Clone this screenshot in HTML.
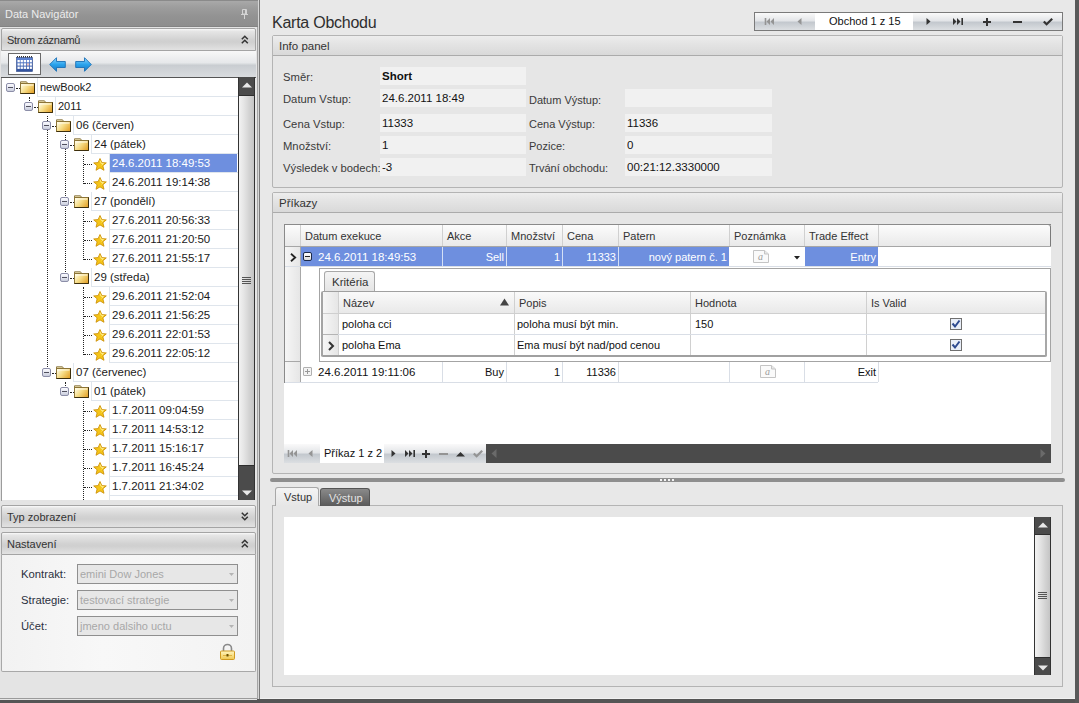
<!DOCTYPE html><html><head><meta charset="utf-8"><style>
*{margin:0;padding:0;box-sizing:border-box}
html,body{width:1079px;height:703px;overflow:hidden;background:#e8e8e8;font-family:"Liberation Sans",sans-serif;font-size:11px;color:#1e1e1e}
.a{position:absolute}
.t{position:absolute;white-space:nowrap;line-height:13px}
svg{position:absolute;overflow:visible}
.hdr{position:absolute;left:1px;width:255px;height:22px;border:1px solid #a4a4a4;border-radius:2px 2px 0 0;background:linear-gradient(#fafafa,#e6e6e6 10%,#d2d2d2 50%,#cfcfcf 62%,#e2e2e2);}
.hdr span{position:absolute;left:5px;top:5px;font-size:11px;color:#333;white-space:nowrap}
.cell{position:absolute;height:19px;border-left:1px solid #dfe5ec;border-bottom:1px solid #dfe5ec;background:#fff}
.cell span{position:absolute;left:2px;top:3px;font-size:11.5px;color:#1a1a1a;white-space:nowrap}
.cell b{position:absolute;left:0;top:0;right:1px;bottom:0;background:#6e8fdf}
.cell.sel span{color:#fff}
.exp{position:absolute;width:9px;height:9px;border:1px solid #8c8ea8;border-radius:2px;background:linear-gradient(#fbfbff,#e4e6f0 50%,#c9cddc)}
.exp:after{content:"";position:absolute;left:1px;top:3px;width:5px;height:1px;background:#50505e}
.vd{position:absolute;width:1px;border-left:1px dotted #222}
.hd{position:absolute;height:1px;border-top:1px dotted #222}
.lbl{position:absolute;white-space:nowrap;font-size:11.25px;color:#3a3a3a}
.box{position:absolute;background:#f1f1f1}
.box span{position:absolute;left:2px;top:3px;white-space:nowrap;font-size:11.5px;color:#111}
.grp{position:absolute;border:1px solid #b4b4b4;border-radius:2px;background:#e6e6e6}
.gh{position:absolute;left:0;top:0;right:0;height:20px;border-bottom:1px solid #ababab;background:linear-gradient(#ededed,#e4e4e4 40%,#d9d9d9)}
.gh span{position:absolute;left:6px;top:4px;font-size:11.5px;color:#333;white-space:nowrap}
.gcol{position:absolute;top:0;height:22px;border-right:1px solid #d4d4d4;background:linear-gradient(#fafafa,#ececec)}
.gcol span{position:absolute;left:5px;top:5px;font-size:11.5px;color:#333;white-space:nowrap}
.gc{position:absolute;white-space:nowrap;font-size:11.5px}
.vl{position:absolute;width:1px;background:#d9dee6}
.hl{position:absolute;height:1px;background:#d9dee6}
</style></head><body>
<div class="a" style="left:0;top:0;width:259px;height:700px;background:#e4e4e4"></div>
<div class="a" style="left:0;top:0;width:258px;height:27px;border-top:1px solid #8a8a8a;border-bottom:1px solid #838383;background:linear-gradient(#a9a9a9,#9d9d9d 25%,#939393 60%,#8e8e8e)"><span class="t" style="left:5px;top:7px;font-size:11px;color:#ececec">Data Navigátor</span></div>
<svg style="left:241px;top:9px" width="8" height="10" viewBox="0 0 8 10"><path d="M1.5 0.5h4v4.5h-4z" fill="none" stroke="#d4d4d4" stroke-width="1"/><path d="M4.5 1v4" stroke="#d4d4d4" stroke-width="1"/><path d="M0 5.5h7" stroke="#d4d4d4" stroke-width="1"/><path d="M3.5 6v4" stroke="#d4d4d4" stroke-width="1"/></svg>
<div class="a" style="left:257px;top:27px;width:1px;height:673px;background:#a4a4a4"></div>
<div class="a" style="left:258px;top:0;width:1px;height:700px;background:#d6d6d6"></div>
<div class="a" style="left:259px;top:0;width:1px;height:700px;background:#7a7a7a"></div>
<div class="hdr" style="top:28px;height:23px"><span style="letter-spacing:-0.3px">Strom záznamů</span></div>
<svg style="left:241px;top:35px" width="8" height="9" viewBox="0 0 8 9"><path d="M0.8 4.2L3.8 1.2 6.8 4.2M0.8 8.2L3.8 5.2 6.8 8.2" fill="none" stroke="#333" stroke-width="1.5"/></svg>
<div class="a" style="left:1px;top:51px;width:255px;height:27px;background:linear-gradient(#f8f8f8,#e6e8ea 45%,#c9cdd1 55%,#d9dcdf);border-bottom:1px solid #555"><div class="a" style="left:7px;top:2px;width:33px;height:22px;border:1px solid #6a6a6a;background:#fff"></div></div>
<svg style="left:16px;top:56px" width="17" height="16" viewBox="0 0 17 16"><defs><linearGradient id="cg" x1="0" y1="0" x2="0" y2="1"><stop offset="0" stop-color="#5f86d8"/><stop offset="1" stop-color="#2f4f9a"/></linearGradient></defs><rect x="0.5" y="1.5" width="16" height="14" fill="url(#cg)" stroke="#2c4788" stroke-width="0.6"/><path d="M1 0.8h15" stroke="#333" stroke-width="1.4" stroke-dasharray="1 1"/><g fill="#fff"><rect x="1.5" y="4" width="2.3" height="2.3"/><rect x="4.6" y="4" width="2.3" height="2.3"/><rect x="7.7" y="4" width="2.3" height="2.3"/><rect x="10.8" y="4" width="2.3" height="2.3"/><rect x="13.9" y="4" width="2" height="2.3"/><rect x="1.5" y="7.3" width="2.3" height="2.3"/><rect x="4.6" y="7.3" width="2.3" height="2.3"/><rect x="7.7" y="7.3" width="2.3" height="2.3"/><rect x="10.8" y="7.3" width="2.3" height="2.3" fill="#f3c9c0"/><rect x="13.9" y="7.3" width="2" height="2.3"/><rect x="1.5" y="10.6" width="2.3" height="2.3"/><rect x="4.6" y="10.6" width="2.3" height="2.3"/><rect x="7.7" y="10.6" width="2.3" height="2.3"/><rect x="10.8" y="10.6" width="2.3" height="2.3"/><rect x="13.9" y="10.6" width="2" height="2.3"/></g></svg>
<svg style="left:49px;top:57px" width="17" height="15" viewBox="0 0 17 15"><defs><linearGradient id="ag" x1="0" y1="0" x2="0" y2="1"><stop offset="0" stop-color="#8fd6ff"/><stop offset="0.5" stop-color="#2aa3ec"/><stop offset="1" stop-color="#1778c4"/></linearGradient></defs><path d="M0.7 7.5L7.5 0.7V4.5H16.3V10.5H7.5V14.3z" fill="url(#ag)" stroke="#1a6fb5" stroke-width="0.9"/></svg><svg style="left:75px;top:57px" width="17" height="15" viewBox="0 0 17 15"><path d="M16.3 7.5L9.5 0.7V4.5H0.7V10.5H9.5V14.3z" fill="url(#ag)" stroke="#1a6fb5" stroke-width="0.9"/></svg>
<div class="a" style="left:2px;top:78px;width:236px;height:422px;background:#fff;overflow:hidden">
<div class="vd" style="left:27px;top:19px;height:4px"></div>
<div class="vd" style="left:45px;top:38px;height:253px"></div>
<div class="vd" style="left:63px;top:57px;height:139px"></div>
<div class="vd" style="left:81px;top:77px;height:29px"></div>
<div class="vd" style="left:81px;top:133px;height:49px"></div>
<div class="vd" style="left:81px;top:209px;height:68px"></div>
<div class="vd" style="left:63px;top:304px;height:6px"></div>
<div class="vd" style="left:81px;top:323px;height:99px"></div>
<div class="hd" style="left:14px;top:10px;width:4px"></div>
<div class="exp" style="left:4px;top:5px"></div>
<svg style="left:18px;top:3px" width="15" height="13" viewBox="0 0 15 13"><defs><linearGradient id="fg" x1="0" y1="0.2" x2="1" y2="0.8"><stop offset="0" stop-color="#fffbe2"/><stop offset="0.45" stop-color="#f6dc86"/><stop offset="1" stop-color="#e3a22a"/></linearGradient></defs><path d="M0.5 2.5V0.8h6l1.2 1.7" fill="#f3e6b4" stroke="#8c7a48" stroke-width="1"/><rect x="0.5" y="2.5" width="14" height="10" fill="url(#fg)" stroke="#8c7436" stroke-width="1"/><path d="M0.5 12.5h14V2.5" fill="none" stroke="#3c2e0c" stroke-width="1"/><path d="M1.5 4h12" stroke="#fffbe8" stroke-width="1"/></svg>
<div class="cell" style="left:35px;top:0px;width:201px"><span style="font-size:11px;top:3px">newBook2</span></div>
<div class="hd" style="left:32px;top:29px;width:4px"></div>
<div class="exp" style="left:22px;top:24px"></div>
<svg style="left:36px;top:22px" width="15" height="13" viewBox="0 0 15 13"><defs><linearGradient id="fg" x1="0" y1="0.2" x2="1" y2="0.8"><stop offset="0" stop-color="#fffbe2"/><stop offset="0.45" stop-color="#f6dc86"/><stop offset="1" stop-color="#e3a22a"/></linearGradient></defs><path d="M0.5 2.5V0.8h6l1.2 1.7" fill="#f3e6b4" stroke="#8c7a48" stroke-width="1"/><rect x="0.5" y="2.5" width="14" height="10" fill="url(#fg)" stroke="#8c7436" stroke-width="1"/><path d="M0.5 12.5h14V2.5" fill="none" stroke="#3c2e0c" stroke-width="1"/><path d="M1.5 4h12" stroke="#fffbe8" stroke-width="1"/></svg>
<div class="cell" style="left:53px;top:19px;width:183px"><span style="font-size:11px;top:3px">2011</span></div>
<div class="hd" style="left:50px;top:48px;width:4px"></div>
<div class="exp" style="left:40px;top:43px"></div>
<svg style="left:54px;top:41px" width="15" height="13" viewBox="0 0 15 13"><defs><linearGradient id="fg" x1="0" y1="0.2" x2="1" y2="0.8"><stop offset="0" stop-color="#fffbe2"/><stop offset="0.45" stop-color="#f6dc86"/><stop offset="1" stop-color="#e3a22a"/></linearGradient></defs><path d="M0.5 2.5V0.8h6l1.2 1.7" fill="#f3e6b4" stroke="#8c7a48" stroke-width="1"/><rect x="0.5" y="2.5" width="14" height="10" fill="url(#fg)" stroke="#8c7436" stroke-width="1"/><path d="M0.5 12.5h14V2.5" fill="none" stroke="#3c2e0c" stroke-width="1"/><path d="M1.5 4h12" stroke="#fffbe8" stroke-width="1"/></svg>
<div class="cell" style="left:71px;top:38px;width:165px"><span>06 (červen)</span></div>
<div class="hd" style="left:68px;top:67px;width:4px"></div>
<div class="exp" style="left:58px;top:62px"></div>
<svg style="left:72px;top:60px" width="15" height="13" viewBox="0 0 15 13"><defs><linearGradient id="fg" x1="0" y1="0.2" x2="1" y2="0.8"><stop offset="0" stop-color="#fffbe2"/><stop offset="0.45" stop-color="#f6dc86"/><stop offset="1" stop-color="#e3a22a"/></linearGradient></defs><path d="M0.5 2.5V0.8h6l1.2 1.7" fill="#f3e6b4" stroke="#8c7a48" stroke-width="1"/><rect x="0.5" y="2.5" width="14" height="10" fill="url(#fg)" stroke="#8c7436" stroke-width="1"/><path d="M0.5 12.5h14V2.5" fill="none" stroke="#3c2e0c" stroke-width="1"/><path d="M1.5 4h12" stroke="#fffbe8" stroke-width="1"/></svg>
<div class="cell" style="left:89px;top:57px;width:147px"><span>24 (pátek)</span></div>
<div class="hd" style="left:82px;top:86px;width:8px"></div>
<svg style="left:91px;top:80px" width="14" height="13" viewBox="0 0 14 13"><path d="M7 0.5L8.9 4.6 13.3 4.9 9.9 7.8 11 12.3 7 9.9 3 12.3 4.1 7.8 0.7 4.9 5.1 4.6z" fill="#f5c518" stroke="#c98a00" stroke-width="0.8"/><path d="M7 2.5L8 5.3 10.5 5.5 8.6 7.2" fill="none" stroke="#fff4a0" stroke-width="0.8"/></svg>
<div class="cell sel" style="left:107px;top:76px;width:129px"><b></b><span>24.6.2011 18:49:53</span></div>
<div class="hd" style="left:82px;top:105px;width:8px"></div>
<svg style="left:91px;top:99px" width="14" height="13" viewBox="0 0 14 13"><path d="M7 0.5L8.9 4.6 13.3 4.9 9.9 7.8 11 12.3 7 9.9 3 12.3 4.1 7.8 0.7 4.9 5.1 4.6z" fill="#f5c518" stroke="#c98a00" stroke-width="0.8"/><path d="M7 2.5L8 5.3 10.5 5.5 8.6 7.2" fill="none" stroke="#fff4a0" stroke-width="0.8"/></svg>
<div class="cell" style="left:107px;top:95px;width:129px"><span>24.6.2011 19:14:38</span></div>
<div class="hd" style="left:68px;top:124px;width:4px"></div>
<div class="exp" style="left:58px;top:119px"></div>
<svg style="left:72px;top:117px" width="15" height="13" viewBox="0 0 15 13"><defs><linearGradient id="fg" x1="0" y1="0.2" x2="1" y2="0.8"><stop offset="0" stop-color="#fffbe2"/><stop offset="0.45" stop-color="#f6dc86"/><stop offset="1" stop-color="#e3a22a"/></linearGradient></defs><path d="M0.5 2.5V0.8h6l1.2 1.7" fill="#f3e6b4" stroke="#8c7a48" stroke-width="1"/><rect x="0.5" y="2.5" width="14" height="10" fill="url(#fg)" stroke="#8c7436" stroke-width="1"/><path d="M0.5 12.5h14V2.5" fill="none" stroke="#3c2e0c" stroke-width="1"/><path d="M1.5 4h12" stroke="#fffbe8" stroke-width="1"/></svg>
<div class="cell" style="left:89px;top:114px;width:147px"><span>27 (pondělí)</span></div>
<div class="hd" style="left:82px;top:143px;width:8px"></div>
<svg style="left:91px;top:137px" width="14" height="13" viewBox="0 0 14 13"><path d="M7 0.5L8.9 4.6 13.3 4.9 9.9 7.8 11 12.3 7 9.9 3 12.3 4.1 7.8 0.7 4.9 5.1 4.6z" fill="#f5c518" stroke="#c98a00" stroke-width="0.8"/><path d="M7 2.5L8 5.3 10.5 5.5 8.6 7.2" fill="none" stroke="#fff4a0" stroke-width="0.8"/></svg>
<div class="cell" style="left:107px;top:133px;width:129px"><span>27.6.2011 20:56:33</span></div>
<div class="hd" style="left:82px;top:162px;width:8px"></div>
<svg style="left:91px;top:156px" width="14" height="13" viewBox="0 0 14 13"><path d="M7 0.5L8.9 4.6 13.3 4.9 9.9 7.8 11 12.3 7 9.9 3 12.3 4.1 7.8 0.7 4.9 5.1 4.6z" fill="#f5c518" stroke="#c98a00" stroke-width="0.8"/><path d="M7 2.5L8 5.3 10.5 5.5 8.6 7.2" fill="none" stroke="#fff4a0" stroke-width="0.8"/></svg>
<div class="cell" style="left:107px;top:152px;width:129px"><span>27.6.2011 21:20:50</span></div>
<div class="hd" style="left:82px;top:181px;width:8px"></div>
<svg style="left:91px;top:175px" width="14" height="13" viewBox="0 0 14 13"><path d="M7 0.5L8.9 4.6 13.3 4.9 9.9 7.8 11 12.3 7 9.9 3 12.3 4.1 7.8 0.7 4.9 5.1 4.6z" fill="#f5c518" stroke="#c98a00" stroke-width="0.8"/><path d="M7 2.5L8 5.3 10.5 5.5 8.6 7.2" fill="none" stroke="#fff4a0" stroke-width="0.8"/></svg>
<div class="cell" style="left:107px;top:171px;width:129px"><span>27.6.2011 21:55:17</span></div>
<div class="hd" style="left:68px;top:200px;width:4px"></div>
<div class="exp" style="left:58px;top:195px"></div>
<svg style="left:72px;top:193px" width="15" height="13" viewBox="0 0 15 13"><defs><linearGradient id="fg" x1="0" y1="0.2" x2="1" y2="0.8"><stop offset="0" stop-color="#fffbe2"/><stop offset="0.45" stop-color="#f6dc86"/><stop offset="1" stop-color="#e3a22a"/></linearGradient></defs><path d="M0.5 2.5V0.8h6l1.2 1.7" fill="#f3e6b4" stroke="#8c7a48" stroke-width="1"/><rect x="0.5" y="2.5" width="14" height="10" fill="url(#fg)" stroke="#8c7436" stroke-width="1"/><path d="M0.5 12.5h14V2.5" fill="none" stroke="#3c2e0c" stroke-width="1"/><path d="M1.5 4h12" stroke="#fffbe8" stroke-width="1"/></svg>
<div class="cell" style="left:89px;top:190px;width:147px"><span>29 (středa)</span></div>
<div class="hd" style="left:82px;top:219px;width:8px"></div>
<svg style="left:91px;top:213px" width="14" height="13" viewBox="0 0 14 13"><path d="M7 0.5L8.9 4.6 13.3 4.9 9.9 7.8 11 12.3 7 9.9 3 12.3 4.1 7.8 0.7 4.9 5.1 4.6z" fill="#f5c518" stroke="#c98a00" stroke-width="0.8"/><path d="M7 2.5L8 5.3 10.5 5.5 8.6 7.2" fill="none" stroke="#fff4a0" stroke-width="0.8"/></svg>
<div class="cell" style="left:107px;top:209px;width:129px"><span>29.6.2011 21:52:04</span></div>
<div class="hd" style="left:82px;top:238px;width:8px"></div>
<svg style="left:91px;top:232px" width="14" height="13" viewBox="0 0 14 13"><path d="M7 0.5L8.9 4.6 13.3 4.9 9.9 7.8 11 12.3 7 9.9 3 12.3 4.1 7.8 0.7 4.9 5.1 4.6z" fill="#f5c518" stroke="#c98a00" stroke-width="0.8"/><path d="M7 2.5L8 5.3 10.5 5.5 8.6 7.2" fill="none" stroke="#fff4a0" stroke-width="0.8"/></svg>
<div class="cell" style="left:107px;top:228px;width:129px"><span>29.6.2011 21:56:25</span></div>
<div class="hd" style="left:82px;top:257px;width:8px"></div>
<svg style="left:91px;top:251px" width="14" height="13" viewBox="0 0 14 13"><path d="M7 0.5L8.9 4.6 13.3 4.9 9.9 7.8 11 12.3 7 9.9 3 12.3 4.1 7.8 0.7 4.9 5.1 4.6z" fill="#f5c518" stroke="#c98a00" stroke-width="0.8"/><path d="M7 2.5L8 5.3 10.5 5.5 8.6 7.2" fill="none" stroke="#fff4a0" stroke-width="0.8"/></svg>
<div class="cell" style="left:107px;top:247px;width:129px"><span>29.6.2011 22:01:53</span></div>
<div class="hd" style="left:82px;top:276px;width:8px"></div>
<svg style="left:91px;top:270px" width="14" height="13" viewBox="0 0 14 13"><path d="M7 0.5L8.9 4.6 13.3 4.9 9.9 7.8 11 12.3 7 9.9 3 12.3 4.1 7.8 0.7 4.9 5.1 4.6z" fill="#f5c518" stroke="#c98a00" stroke-width="0.8"/><path d="M7 2.5L8 5.3 10.5 5.5 8.6 7.2" fill="none" stroke="#fff4a0" stroke-width="0.8"/></svg>
<div class="cell" style="left:107px;top:266px;width:129px"><span>29.6.2011 22:05:12</span></div>
<div class="hd" style="left:50px;top:295px;width:4px"></div>
<div class="exp" style="left:40px;top:290px"></div>
<svg style="left:54px;top:288px" width="15" height="13" viewBox="0 0 15 13"><defs><linearGradient id="fg" x1="0" y1="0.2" x2="1" y2="0.8"><stop offset="0" stop-color="#fffbe2"/><stop offset="0.45" stop-color="#f6dc86"/><stop offset="1" stop-color="#e3a22a"/></linearGradient></defs><path d="M0.5 2.5V0.8h6l1.2 1.7" fill="#f3e6b4" stroke="#8c7a48" stroke-width="1"/><rect x="0.5" y="2.5" width="14" height="10" fill="url(#fg)" stroke="#8c7436" stroke-width="1"/><path d="M0.5 12.5h14V2.5" fill="none" stroke="#3c2e0c" stroke-width="1"/><path d="M1.5 4h12" stroke="#fffbe8" stroke-width="1"/></svg>
<div class="cell" style="left:71px;top:285px;width:165px"><span>07 (červenec)</span></div>
<div class="hd" style="left:68px;top:314px;width:4px"></div>
<div class="exp" style="left:58px;top:309px"></div>
<svg style="left:72px;top:307px" width="15" height="13" viewBox="0 0 15 13"><defs><linearGradient id="fg" x1="0" y1="0.2" x2="1" y2="0.8"><stop offset="0" stop-color="#fffbe2"/><stop offset="0.45" stop-color="#f6dc86"/><stop offset="1" stop-color="#e3a22a"/></linearGradient></defs><path d="M0.5 2.5V0.8h6l1.2 1.7" fill="#f3e6b4" stroke="#8c7a48" stroke-width="1"/><rect x="0.5" y="2.5" width="14" height="10" fill="url(#fg)" stroke="#8c7436" stroke-width="1"/><path d="M0.5 12.5h14V2.5" fill="none" stroke="#3c2e0c" stroke-width="1"/><path d="M1.5 4h12" stroke="#fffbe8" stroke-width="1"/></svg>
<div class="cell" style="left:89px;top:304px;width:147px"><span>01 (pátek)</span></div>
<div class="hd" style="left:82px;top:333px;width:8px"></div>
<svg style="left:91px;top:327px" width="14" height="13" viewBox="0 0 14 13"><path d="M7 0.5L8.9 4.6 13.3 4.9 9.9 7.8 11 12.3 7 9.9 3 12.3 4.1 7.8 0.7 4.9 5.1 4.6z" fill="#f5c518" stroke="#c98a00" stroke-width="0.8"/><path d="M7 2.5L8 5.3 10.5 5.5 8.6 7.2" fill="none" stroke="#fff4a0" stroke-width="0.8"/></svg>
<div class="cell" style="left:107px;top:323px;width:129px"><span>1.7.2011 09:04:59</span></div>
<div class="hd" style="left:82px;top:352px;width:8px"></div>
<svg style="left:91px;top:346px" width="14" height="13" viewBox="0 0 14 13"><path d="M7 0.5L8.9 4.6 13.3 4.9 9.9 7.8 11 12.3 7 9.9 3 12.3 4.1 7.8 0.7 4.9 5.1 4.6z" fill="#f5c518" stroke="#c98a00" stroke-width="0.8"/><path d="M7 2.5L8 5.3 10.5 5.5 8.6 7.2" fill="none" stroke="#fff4a0" stroke-width="0.8"/></svg>
<div class="cell" style="left:107px;top:342px;width:129px"><span>1.7.2011 14:53:12</span></div>
<div class="hd" style="left:82px;top:371px;width:8px"></div>
<svg style="left:91px;top:365px" width="14" height="13" viewBox="0 0 14 13"><path d="M7 0.5L8.9 4.6 13.3 4.9 9.9 7.8 11 12.3 7 9.9 3 12.3 4.1 7.8 0.7 4.9 5.1 4.6z" fill="#f5c518" stroke="#c98a00" stroke-width="0.8"/><path d="M7 2.5L8 5.3 10.5 5.5 8.6 7.2" fill="none" stroke="#fff4a0" stroke-width="0.8"/></svg>
<div class="cell" style="left:107px;top:361px;width:129px"><span>1.7.2011 15:16:17</span></div>
<div class="hd" style="left:82px;top:390px;width:8px"></div>
<svg style="left:91px;top:384px" width="14" height="13" viewBox="0 0 14 13"><path d="M7 0.5L8.9 4.6 13.3 4.9 9.9 7.8 11 12.3 7 9.9 3 12.3 4.1 7.8 0.7 4.9 5.1 4.6z" fill="#f5c518" stroke="#c98a00" stroke-width="0.8"/><path d="M7 2.5L8 5.3 10.5 5.5 8.6 7.2" fill="none" stroke="#fff4a0" stroke-width="0.8"/></svg>
<div class="cell" style="left:107px;top:380px;width:129px"><span>1.7.2011 16:45:24</span></div>
<div class="hd" style="left:82px;top:409px;width:8px"></div>
<svg style="left:91px;top:403px" width="14" height="13" viewBox="0 0 14 13"><path d="M7 0.5L8.9 4.6 13.3 4.9 9.9 7.8 11 12.3 7 9.9 3 12.3 4.1 7.8 0.7 4.9 5.1 4.6z" fill="#f5c518" stroke="#c98a00" stroke-width="0.8"/><path d="M7 2.5L8 5.3 10.5 5.5 8.6 7.2" fill="none" stroke="#fff4a0" stroke-width="0.8"/></svg>
<div class="cell" style="left:107px;top:399px;width:129px"><span>1.7.2011 21:34:02</span></div>
<div class="hd" style="left:82px;top:428px;width:8px"></div>
<svg style="left:91px;top:422px" width="14" height="13" viewBox="0 0 14 13"><path d="M7 0.5L8.9 4.6 13.3 4.9 9.9 7.8 11 12.3 7 9.9 3 12.3 4.1 7.8 0.7 4.9 5.1 4.6z" fill="#f5c518" stroke="#c98a00" stroke-width="0.8"/><path d="M7 2.5L8 5.3 10.5 5.5 8.6 7.2" fill="none" stroke="#fff4a0" stroke-width="0.8"/></svg>
<div class="cell" style="left:107px;top:418px;width:129px"><span></span></div>
</div>
<div class="a" style="left:1px;top:78px;width:1px;height:423px;background:#9c9c9c"></div>
<div class="a" style="left:238px;top:77px;width:17px;height:423px;background:#4b4b4b;border-left:1px solid #333;border-right:1px solid #333"></div>
<div class="a" style="left:239px;top:96px;width:15px;height:370px;background:linear-gradient(90deg,#f2f2f2,#e6e6e6 30%,#d2d2d2 70%,#c4c4c4);border-bottom:1px solid #2e2e2e"></div>
<div class="a" style="left:239px;top:95px;width:15px;height:1px;background:#2e2e2e"></div>
<div class="a" style="left:242px;top:277px;width:9px;height:1px;background:#555"></div>
<div class="a" style="left:242px;top:279px;width:9px;height:1px;background:#555"></div>
<div class="a" style="left:242px;top:281px;width:9px;height:1px;background:#555"></div>
<div class="a" style="left:242px;top:283px;width:9px;height:1px;background:#555"></div>
<svg style="left:242px;top:82px" width="10" height="6" viewBox="0 0 10 6"><path d="M0 5.5L5 0.5 10 5.5z" fill="#e8e8e8"/></svg>
<svg style="left:242px;top:490px" width="10" height="6" viewBox="0 0 10 6"><path d="M0 0.5L5 5.5 10 0.5z" fill="#e8e8e8"/></svg>
<div class="hdr" style="top:505px;height:23px"><span>Typ zobrazení</span></div>
<svg style="left:241px;top:512px" width="8" height="9" viewBox="0 0 8 9"><path d="M0.8 0.8L3.8 3.8 6.8 0.8M0.8 4.8L3.8 7.8 6.8 4.8" fill="none" stroke="#333" stroke-width="1.5"/></svg>
<div class="hdr" style="top:532px;height:23px"><span>Nastavení</span></div>
<svg style="left:241px;top:539px" width="8" height="9" viewBox="0 0 8 9"><path d="M0.8 4.2L3.8 1.2 6.8 4.2M0.8 8.2L3.8 5.2 6.8 8.2" fill="none" stroke="#333" stroke-width="1.5"/></svg>
<div class="a" style="left:1px;top:555px;width:255px;height:117px;border:1px solid #a8a8a8;border-top:none;border-radius:0 0 2px 2px;background:linear-gradient(90deg,#f2f2f2,#f8f8f8 40%,#f3f3f3)"></div>
<svg style="left:220px;top:644px" width="15" height="16" viewBox="0 0 15 16"><defs><linearGradient id="lg" x1="0" y1="0" x2="0" y2="1"><stop offset="0" stop-color="#fff6c0"/><stop offset="1" stop-color="#f0c850"/></linearGradient></defs><path d="M3.5 7V4.5a4 4 0 0 1 8 0V7" fill="none" stroke="#8a8a8a" stroke-width="1.6"/><rect x="0.5" y="7" width="14" height="8.5" rx="1" fill="url(#lg)" stroke="#d09a20"/><path d="M3 11.5h9" stroke="#d8a830" stroke-width="0.8"/><rect x="6.5" y="10" width="2" height="2.5" fill="#6a5000"/></svg>
<span class="lbl" style="left:21px;top:568px;color:#2a3040">Kontrakt:</span>
<div class="a" style="left:77px;top:564px;width:161px;height:20px;border:1px solid #8f8f8f;background:#e7e7e7"><span class="t" style="left:2px;top:3px;font-size:11px;color:#a8a8a8">emini Dow Jones</span><svg style="left:151px;top:8px" width="5" height="3" viewBox="0 0 5 3"><path d="M0 0h5L2.5 3z" fill="#b4b4b4"/></svg></div>
<span class="lbl" style="left:21px;top:594px;color:#2a3040">Strategie:</span>
<div class="a" style="left:77px;top:590px;width:161px;height:20px;border:1px solid #8f8f8f;background:#e7e7e7"><span class="t" style="left:2px;top:3px;font-size:11px;color:#a8a8a8">testovací strategie</span><svg style="left:151px;top:8px" width="5" height="3" viewBox="0 0 5 3"><path d="M0 0h5L2.5 3z" fill="#b4b4b4"/></svg></div>
<span class="lbl" style="left:21px;top:620px;color:#2a3040">Účet:</span>
<div class="a" style="left:77px;top:616px;width:161px;height:20px;border:1px solid #8f8f8f;background:#e7e7e7"><span class="t" style="left:2px;top:3px;font-size:11px;color:#a8a8a8">jmeno dalsiho uctu</span><svg style="left:151px;top:8px" width="5" height="3" viewBox="0 0 5 3"><path d="M0 0h5L2.5 3z" fill="#b4b4b4"/></svg></div>
<span class="t" style="left:272px;top:13px;font-size:16px;letter-spacing:-0.25px;line-height:20px;color:#2e2e2e">Karta Obchodu</span>
<div class="a" style="left:754px;top:12px;width:309px;height:19px;border:1px solid #7a7a7a;background:linear-gradient(#fafafa,#e3e5e8 45%,#c3c8ce 55%,#dcdfe2)"><div class="a" style="left:60px;top:0;width:98px;height:17px;background:#fff"></div><span class="t" style="left:74px;top:2px;font-size:11px;color:#111">Obchod 1 z 15</span></div>
<svg style="left:765px;top:18px" width="10" height="8" viewBox="0 0 10 8"><path d="M0.5 0v7" stroke="#949494" stroke-width="1.6"/><path d="M5 0v7L1.5 3.5z M9 0v7L5.5 3.5z" fill="#949494"/></svg>
<svg style="left:797px;top:18px" width="5" height="8" viewBox="0 0 5 8"><path d="M4.5 0v7L0.5 3.5z" fill="#949494"/></svg>
<svg style="left:926px;top:18px" width="5" height="8" viewBox="0 0 5 8"><path d="M0.5 0v7L4.5 3.5z" fill="#333"/></svg>
<svg style="left:953px;top:18px" width="10" height="8" viewBox="0 0 10 8"><path d="M9.2 0v7" stroke="#333" stroke-width="1.6"/><path d="M0 0v7L3.5 3.5z M4 0v7L7.5 3.5z" fill="#333"/></svg>
<svg style="left:983px;top:18px" width="8" height="8" viewBox="0 0 8 8"><path d="M4 0v8M0 4h8" stroke="#333" stroke-width="2"/></svg>
<svg style="left:1013px;top:18px" width="9" height="8" viewBox="0 0 9 8"><path d="M0 4h9" stroke="#333" stroke-width="2"/></svg>
<svg style="left:1043px;top:18px" width="10" height="8" viewBox="0 0 10 8"><path d="M0.8 3.5L3.6 6.3 9.2 0.8" fill="none" stroke="#333" stroke-width="2.2"/></svg>
<div class="grp" style="left:272px;top:35px;width:791px;height:153px"><div class="gh"><span>Info panel</span></div></div>
<span class="lbl" style="left:283px;top:71px">Směr:</span>
<div class="box" style="left:380px;top:67px;width:146px;height:18px"><span style="font-weight:bold">Short</span></div>
<span class="lbl" style="left:283px;top:93px">Datum Vstup:</span>
<div class="box" style="left:380px;top:89px;width:146px;height:18px"><span style="">24.6.2011 18:49</span></div>
<span class="lbl" style="left:283px;top:118px">Cena Vstup:</span>
<div class="box" style="left:380px;top:114px;width:146px;height:18px"><span style="">11333</span></div>
<span class="lbl" style="left:283px;top:140px">Množství:</span>
<div class="box" style="left:380px;top:136px;width:146px;height:18px"><span style="">1</span></div>
<span class="lbl" style="left:283px;top:162px">Výsledek v bodech:</span>
<div class="box" style="left:380px;top:158px;width:146px;height:18px"><span style="">-3</span></div>
<span class="lbl" style="left:529px;top:94px;font-size:11px">Datum Výstup:</span>
<div class="box" style="left:625px;top:89px;width:147px;height:18px"><span></span></div>
<span class="lbl" style="left:529px;top:118px;font-size:11px">Cena Výstup:</span>
<div class="box" style="left:625px;top:114px;width:147px;height:18px"><span>11336</span></div>
<span class="lbl" style="left:529px;top:140px;font-size:11px">Pozice:</span>
<div class="box" style="left:625px;top:136px;width:147px;height:18px"><span>0</span></div>
<span class="lbl" style="left:529px;top:162px;font-size:11px">Trvání obchodu:</span>
<div class="box" style="left:625px;top:158px;width:147px;height:18px"><span>00:21:12.3330000</span></div>
<div class="grp" style="left:272px;top:192px;width:791px;height:282px"><div class="gh"><span>Příkazy</span></div></div>
<div class="a" style="left:284px;top:224px;width:767px;height:220px;background:#fff;border-top:1px solid #8a8a8a"></div>
<div class="a" style="left:284px;top:224px;width:1px;height:159px;background:#8a8a8a"></div>
<div class="a" style="left:284px;top:224px;width:767px;height:23px;border-top:1px solid #8a8a8a;border-left:1px solid #8a8a8a;border-right:1px solid #7a7a7a;border-radius:0 3px 0 0;background:linear-gradient(#fcfcfc,#f2f2f2 50%,#e8e8e8)"></div>
<div class="a" style="left:300px;top:225px;width:1px;height:21px;background:#d0d0d0"></div>
<span class="t" style="left:305px;top:230px;font-size:11px;color:#333">Datum exekuce</span>
<div class="a" style="left:442px;top:225px;width:1px;height:21px;background:#d0d0d0"></div>
<span class="t" style="left:447px;top:230px;font-size:11px;color:#333">Akce</span>
<div class="a" style="left:506px;top:225px;width:1px;height:21px;background:#d0d0d0"></div>
<span class="t" style="left:511px;top:230px;font-size:11px;color:#333">Množství</span>
<div class="a" style="left:562px;top:225px;width:1px;height:21px;background:#d0d0d0"></div>
<span class="t" style="left:567px;top:230px;font-size:11px;color:#333">Cena</span>
<div class="a" style="left:618px;top:225px;width:1px;height:21px;background:#d0d0d0"></div>
<span class="t" style="left:623px;top:230px;font-size:11px;color:#333">Patern</span>
<div class="a" style="left:729px;top:225px;width:1px;height:21px;background:#d0d0d0"></div>
<span class="t" style="left:734px;top:230px;font-size:11px;color:#333">Poznámka</span>
<div class="a" style="left:804px;top:225px;width:1px;height:21px;background:#d0d0d0"></div>
<span class="t" style="left:809px;top:230px;font-size:11px;color:#333">Trade Effect</span>
<div class="a" style="left:878px;top:225px;width:1px;height:21px;background:#d0d0d0"></div>
<div class="a" style="left:285px;top:246px;width:766px;height:1px;background:#a6a6a6"></div>
<div class="a" style="left:285px;top:247px;width:16px;height:136px;background:linear-gradient(90deg,#f6f6f6,#e6e6e6);border-right:1px solid #a8a8a8;border-bottom:1px solid #a8a8a8"></div>
<div class="a" style="left:301px;top:247px;width:428px;height:20px;background:#6e8fdf"></div>
<div class="a" style="left:805px;top:247px;width:73px;height:20px;background:#6e8fdf"></div>
<div class="a" style="left:442px;top:247px;width:1px;height:20px;background:#d4e0f6"></div>
<div class="a" style="left:506px;top:247px;width:1px;height:20px;background:#d4e0f6"></div>
<div class="a" style="left:562px;top:247px;width:1px;height:20px;background:#d4e0f6"></div>
<div class="a" style="left:618px;top:247px;width:1px;height:20px;background:#d4e0f6"></div>
<div class="a" style="left:285px;top:266px;width:766px;height:1px;background:#d9dee6"></div>
<span class="t" style="left:318px;top:251px;font-size:11.5px;color:#fff">24.6.2011 18:49:53</span>
<div class="a" style="left:303px;top:252px;width:9px;height:9px;border:1px solid #1c2a4a;border-radius:2px;background:linear-gradient(#fff,#dcdcdc)"><div class="a" style="left:1px;top:3px;width:5px;height:1px;background:#222"></div></div>
<svg style="left:290px;top:253px" width="7" height="9" viewBox="0 0 7 9"><path d="M1 0.8L5.2 4.5 1 8.2" fill="none" stroke="#222" stroke-width="1.8"/></svg>
<svg style="left:753px;top:250px" width="16" height="13" viewBox="0 0 16 13"><path d="M0.5 0.5h11l4 3.5v8.5h-15z" fill="#fafafa" stroke="#c4c4c4"/><path d="M11.5 0.5v3.5h4" fill="#e8e8e8" stroke="#c4c4c4"/><text x="5" y="10" font-family="Liberation Serif" font-style="italic" font-size="10" fill="#9a9a9a">a</text></svg>
<svg style="left:794px;top:256px" width="6" height="4" viewBox="0 0 6 4"><path d="M0 0h6L3 3.5z" fill="#222"/></svg>
<span class="t" style="right:575px;top:251px;font-size:11px;color:#fff">Sell</span>
<span class="t" style="right:519px;top:251px;font-size:11px;color:#fff">1</span>
<span class="t" style="right:463px;top:251px;font-size:11px;color:#fff">11333</span>
<span class="t" style="right:352px;top:251px;font-size:11px;color:#fff">nový patern č. 1</span>
<span class="t" style="right:203px;top:251px;font-size:11px;color:#fff">Entry</span>
<div class="a" style="left:319px;top:268px;width:732px;height:94px;border:1px solid #a4a4a4;background:#fff"></div>
<div class="a" style="left:324px;top:271px;width:51px;height:21px;border:1px solid #a8a8a8;border-bottom:none;border-radius:3px 3px 0 0;background:linear-gradient(#f4f4f4,#e4e4e4)"><span class="t" style="left:7px;top:4px;font-size:11.5px;color:#333">Kritéria</span></div>
<div class="a" style="left:321px;top:291px;width:726px;height:66px;border:1px solid #a0a0a0;border-left:2px solid #a4a4a4;border-bottom:2px solid #a0a0a0;border-right:2px solid #a8a8a8;border-radius:2px;background:#fff"></div>
<div class="a" style="left:323px;top:292px;width:722px;height:21px;background:linear-gradient(#fafafa,#e9e9e9)"></div>
<div class="a" style="left:323px;top:292px;width:15px;height:63px;background:linear-gradient(90deg,#f6f6f6,#e6e6e6)"></div>
<div class="a" style="left:338px;top:292px;width:1px;height:63px;background:#d0d0d0"></div>
<span class="t" style="left:343px;top:297px;font-size:11px;color:#333">Název</span>
<div class="a" style="left:514px;top:292px;width:1px;height:63px;background:#d0d0d0"></div>
<span class="t" style="left:519px;top:297px;font-size:11px;color:#333">Popis</span>
<div class="a" style="left:690px;top:292px;width:1px;height:63px;background:#d0d0d0"></div>
<span class="t" style="left:695px;top:297px;font-size:11px;color:#333">Hodnota</span>
<div class="a" style="left:866px;top:292px;width:1px;height:63px;background:#d0d0d0"></div>
<span class="t" style="left:871px;top:297px;font-size:11px;color:#333">Is Valid</span>
<div class="a" style="left:323px;top:313px;width:722px;height:1px;background:#cfcfcf"></div>
<div class="a" style="left:323px;top:334px;width:722px;height:1px;background:#d9dee6"></div>
<div class="a" style="left:323px;top:334px;width:15px;height:1px;background:#b4b4b4"></div>
<svg style="left:328px;top:341px" width="7" height="10" viewBox="0 0 7 10"><path d="M1 1L5 5 1 9" fill="none" stroke="#333" stroke-width="2"/></svg>
<svg style="left:500px;top:298px" width="9" height="8" viewBox="0 0 9 8"><path d="M0 7.5L4.5 0.5 9 7.5z" fill="#444"/></svg>
<span class="t" style="left:342px;top:318px;font-size:11px;color:#111">poloha cci</span>
<span class="t" style="left:517px;top:318px;font-size:11px;color:#111">poloha musí být min.</span>
<span class="t" style="left:695px;top:318px;font-size:11px;color:#111">150</span>
<svg style="left:950px;top:318px" width="12" height="12" viewBox="0 0 12 12"><rect x="0.5" y="0.5" width="11" height="11" fill="#e9eef8" stroke="#707070"/><path d="M2.5 5.5L5 8.5 9.5 2.5" fill="none" stroke="#2d4a90" stroke-width="2"/></svg>
<span class="t" style="left:342px;top:339px;font-size:11px;color:#111">poloha Ema</span>
<span class="t" style="left:517px;top:339px;font-size:11px;color:#111">Ema musí být nad/pod cenou</span>
<span class="t" style="left:695px;top:339px;font-size:11px;color:#111"></span>
<svg style="left:950px;top:339px" width="12" height="12" viewBox="0 0 12 12"><rect x="0.5" y="0.5" width="11" height="11" fill="#e9eef8" stroke="#707070"/><path d="M2.5 5.5L5 8.5 9.5 2.5" fill="none" stroke="#2d4a90" stroke-width="2"/></svg>
<div class="a" style="left:285px;top:382px;width:593px;height:1px;background:#d9dee6"></div>
<div class="a" style="left:285px;top:361px;width:16px;height:1px;background:#a8a8a8"></div>
<div class="a" style="left:442px;top:362px;width:1px;height:20px;background:#d9dee6"></div>
<div class="a" style="left:506px;top:362px;width:1px;height:20px;background:#d9dee6"></div>
<div class="a" style="left:562px;top:362px;width:1px;height:20px;background:#d9dee6"></div>
<div class="a" style="left:618px;top:362px;width:1px;height:20px;background:#d9dee6"></div>
<div class="a" style="left:729px;top:362px;width:1px;height:20px;background:#d9dee6"></div>
<div class="a" style="left:804px;top:362px;width:1px;height:20px;background:#d9dee6"></div>
<div class="a" style="left:878px;top:362px;width:1px;height:20px;background:#d9dee6"></div>
<span class="t" style="left:318px;top:366px;font-size:11.5px;color:#111">24.6.2011 19:11:06</span>
<div class="a" style="left:303px;top:367px;width:9px;height:9px;border:1px solid #b0b0b0;border-radius:1px;background:#f4f4f4"><div class="a" style="left:1px;top:3px;width:5px;height:1px;background:#999"></div><div class="a" style="left:3px;top:1px;width:1px;height:5px;background:#999"></div></div>
<svg style="left:760px;top:365px" width="16" height="13" viewBox="0 0 16 13"><path d="M0.5 0.5h11l4 3.5v8.5h-15z" fill="#fafafa" stroke="#c4c4c4"/><path d="M11.5 0.5v3.5h4" fill="#e8e8e8" stroke="#c4c4c4"/><text x="5" y="10" font-family="Liberation Serif" font-style="italic" font-size="10" fill="#9a9a9a">a</text></svg>
<span class="t" style="right:575px;top:366px;font-size:11px;color:#111">Buy</span>
<span class="t" style="right:519px;top:366px;font-size:11px;color:#111">1</span>
<span class="t" style="right:463px;top:366px;font-size:11px;color:#111">11336</span>
<span class="t" style="right:203px;top:366px;font-size:11px;color:#111">Exit</span>
<div class="a" style="left:284px;top:444px;width:202px;height:19px;background:linear-gradient(#fafafa,#e3e5e8 45%,#c3c8ce 55%,#dcdfe2)"><div class="a" style="left:36px;top:0;width:64px;height:19px;background:#fff"></div><span class="t" style="left:40px;top:3px;font-size:11px;color:#111">Příkaz 1 z 2</span></div>
<div class="a" style="left:486px;top:444px;width:565px;height:19px;background:#4b4b4b"></div>
<svg style="left:288px;top:450px" width="10" height="8" viewBox="0 0 10 8"><path d="M0.5 0v7" stroke="#949494" stroke-width="1.6"/><path d="M5 0v7L1.5 3.5z M9 0v7L5.5 3.5z" fill="#949494"/></svg>
<svg style="left:308px;top:450px" width="5" height="8" viewBox="0 0 5 8"><path d="M4.5 0v7L0.5 3.5z" fill="#949494"/></svg>
<svg style="left:391px;top:450px" width="5" height="8" viewBox="0 0 5 8"><path d="M0.5 0v7L4.5 3.5z" fill="#333"/></svg>
<svg style="left:405px;top:450px" width="10" height="8" viewBox="0 0 10 8"><path d="M9.2 0v7" stroke="#333" stroke-width="1.6"/><path d="M0 0v7L3.5 3.5z M4 0v7L7.5 3.5z" fill="#333"/></svg>
<svg style="left:422px;top:450px" width="8" height="8" viewBox="0 0 8 8"><path d="M4 0v8M0 4h8" stroke="#333" stroke-width="2"/></svg>
<svg style="left:439px;top:450px" width="9" height="8" viewBox="0 0 9 8"><path d="M0 4h9" stroke="#949494" stroke-width="2"/></svg>
<svg style="left:456px;top:450px" width="9" height="8" viewBox="0 0 9 8"><path d="M0 6.5L4.5 2 9 6.5z" fill="#333"/></svg>
<svg style="left:473px;top:450px" width="10" height="8" viewBox="0 0 10 8"><path d="M0.8 3.5L3.6 6.3 9.2 0.8" fill="none" stroke="#949494" stroke-width="2.2"/></svg>
<svg style="left:491px;top:449px" width="6" height="10" viewBox="0 0 6 10"><path d="M5.5 0v9L0.5 4.5z" fill="#6a6a6a"/></svg>
<svg style="left:1040px;top:449px" width="6" height="10" viewBox="0 0 6 10"><path d="M0.5 0v9L5.5 4.5z" fill="#6a6a6a"/></svg>
<div class="a" style="left:270px;top:478px;width:795px;height:4px;border-radius:2px;background:#8e8e8e"></div>
<div class="a" style="left:660px;top:479px;width:2px;height:2px;background:#f4f4f4"></div>
<div class="a" style="left:664px;top:479px;width:2px;height:2px;background:#f4f4f4"></div>
<div class="a" style="left:668px;top:479px;width:2px;height:2px;background:#f4f4f4"></div>
<div class="a" style="left:672px;top:479px;width:2px;height:2px;background:#f4f4f4"></div>
<div class="a" style="left:272px;top:505px;width:791px;height:182px;border:1px solid #b4b4b4;background:#e6e6e6"></div>
<div class="a" style="left:275px;top:487px;width:44px;height:19px;border:1px solid #a8a8a8;border-bottom:none;border-radius:3px 3px 0 0;background:linear-gradient(#f4f4f4,#e6e6e6)"><span class="t" style="left:8px;top:3px;font-size:11px;color:#333">Vstup</span></div>
<div class="a" style="left:320px;top:488px;width:50px;height:18px;border:1px solid #555;border-bottom:none;border-radius:3px 3px 0 0;background:linear-gradient(#8a8a8a,#5a5a5a)"><span class="t" style="left:8px;top:3px;font-size:11px;color:#e4e4e4">Výstup</span></div>
<div class="a" style="left:284px;top:517px;width:767px;height:158px;background:#fff"></div>
<div class="a" style="left:1034px;top:517px;width:17px;height:158px;background:#4b4b4b;border-left:1px solid #333;border-right:1px solid #333"></div>
<div class="a" style="left:1035px;top:535px;width:15px;height:123px;background:linear-gradient(90deg,#f2f2f2,#e6e6e6 30%,#d2d2d2 70%,#c4c4c4);border-bottom:1px solid #2e2e2e"></div>
<div class="a" style="left:1035px;top:534px;width:15px;height:1px;background:#2e2e2e"></div>
<div class="a" style="left:1038px;top:592px;width:9px;height:1px;background:#555"></div>
<div class="a" style="left:1038px;top:594px;width:9px;height:1px;background:#555"></div>
<div class="a" style="left:1038px;top:596px;width:9px;height:1px;background:#555"></div>
<div class="a" style="left:1038px;top:598px;width:9px;height:1px;background:#555"></div>
<svg style="left:1038px;top:522px" width="10" height="6" viewBox="0 0 10 6"><path d="M0 5.5L5 0.5 10 5.5z" fill="#e8e8e8"/></svg>
<svg style="left:1038px;top:665px" width="10" height="6" viewBox="0 0 10 6"><path d="M0 0.5L5 5.5 10 0.5z" fill="#e8e8e8"/></svg>
<div class="a" style="left:0;top:699px;width:1079px;height:4px;background:#555"></div>
<div class="a" style="left:260px;top:698px;width:815px;height:1px;background:#f2f2f2"></div>
<div class="a" style="left:0;top:698px;width:257px;height:1px;background:#9a9a9a"></div>
<div class="a" style="left:0;top:699px;width:257px;height:1px;background:#e6e6e6"></div>
<div class="a" style="left:1075px;top:0;width:4px;height:703px;background:#595959"></div>
</body></html>
